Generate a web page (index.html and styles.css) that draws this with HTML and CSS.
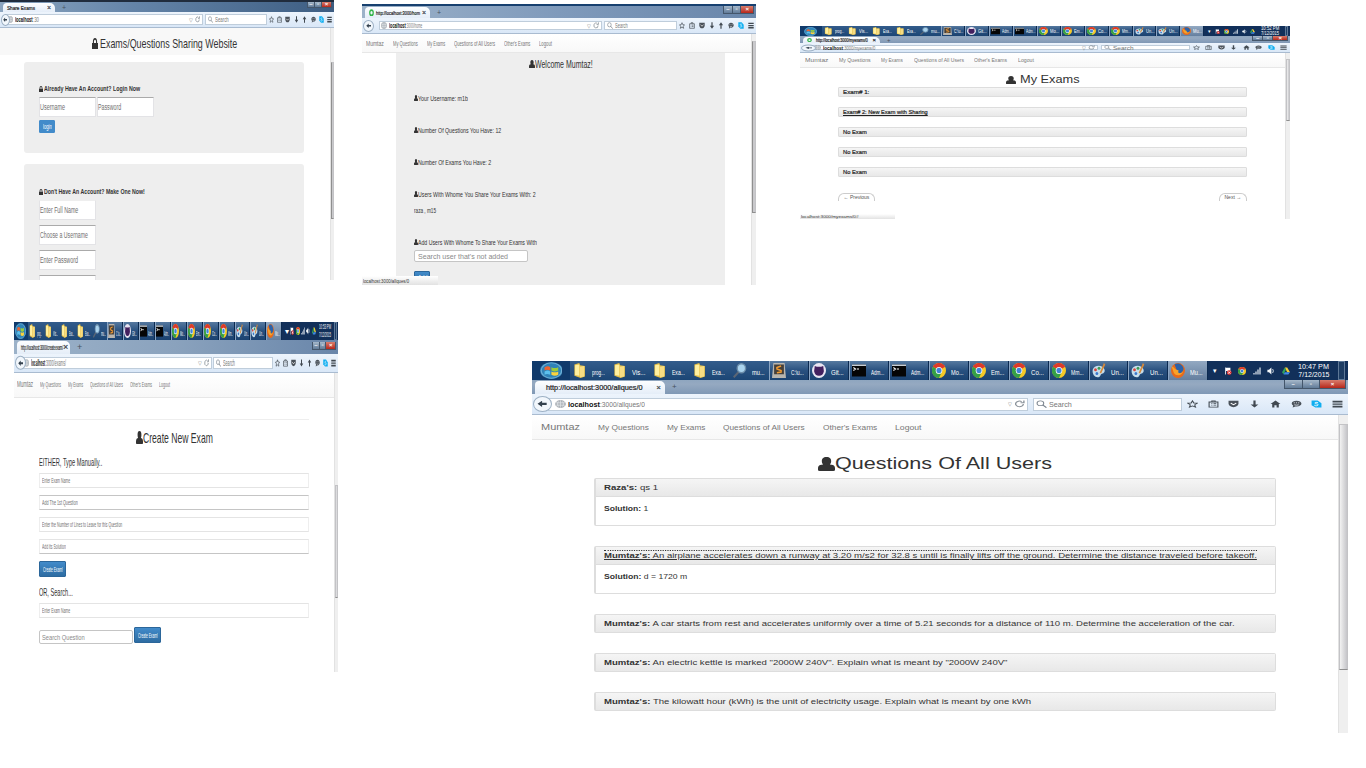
FILE: index.html
```html
<!DOCTYPE html>
<html lang="en">
<head>
<meta charset="utf-8">
<title>Exams/Questions Sharing Website</title>
<link rel="stylesheet" href="styles.css">
</head>
<body>
<svg class="defs" aria-hidden="true">
  <symbol id="user" viewBox="0 0 20 20" preserveAspectRatio="none"><path d="M10 0C6 0 4.500 2.500 4.500 6c0 2 .5 3.500 1.500 4.700L2.500 11.500C.8 12.500 0 14 0 16v2.500Q0 20 2 20h16q2 0 2-1.500V16c0-2-.8-3.500-2.500-4.500L14 10.700c1-1.200 1.500-2.700 1.500-4.700C15.500 2.500 14 0 10 0z"/></symbol>
  <symbol id="lock" viewBox="0 0 20 20" preserveAspectRatio="none"><path d="M10 0C5.500 0 3 3 3 6.500V9H0v11h20V9h-3V6.500C17 3 14.500 0 10 0zM6.500 9V6.500C6.500 4.500 8 3 10 3s3.500 1.500 3.500 3.500V9z"/></symbol>
  <symbol id="folder" viewBox="0 0 20 20" preserveAspectRatio="none"><path d="M2 2l7-2 1 3 7 1v14l-6 2-9-3z" fill="#e8c24a"/><path d="M3 3l6-1v15l-6-1z" fill="#fff0a0"/><path d="M10 5l6-1v14l-6 1z" fill="#f7dd83"/></symbol>
  <symbol id="lens" viewBox="0 0 20 20" preserveAspectRatio="none"><path d="M8 12L1 19" stroke="#5b6675" stroke-width="3"/><circle cx="12" cy="7" r="6" fill="#a9d3ee" stroke="#6d8eaa" stroke-width="2"/></symbol>
  <symbol id="sublime" viewBox="0 0 20 20" preserveAspectRatio="none"><path d="M2 0h16l2 20H0z" fill="#b9b5ae"/><path d="M3 2h14v13H3z" fill="#45403b"/><path d="M13 4L7 6v2l6 2v2l-6 1" fill="none" stroke="#f39b31" stroke-width="2"/></symbol>
  <symbol id="git" viewBox="0 0 20 20" preserveAspectRatio="none"><circle cx="10" cy="10" r="10" fill="#e9e5f2"/><path d="M4 4l3 1h6l3-1 1 7c-1 4-3 6-7 6s-6-2-7-6z" fill="#43205f"/></symbol>
  <symbol id="cmd" viewBox="0 0 20 20" preserveAspectRatio="none"><path d="M0 2h20v16H0z" fill="#050505"/><path d="M0 2h20v2H0z" fill="#c8d0d8"/><path d="M2 6l3 2-3 2M7 8h3" fill="none" stroke="#fff" stroke-width="1.500"/></symbol>
  <symbol id="chrome" viewBox="0 0 20 20" preserveAspectRatio="none"><circle cx="10" cy="10" r="10" fill="#f5c928"/><path d="M10 10L1.300 5A10 10 0 0 1 18.700 5z" fill="#dc3b2c"/><path d="M10 10L1.300 5A10 10 0 0 0 10 20l4-8z" fill="#34a046"/><circle cx="10" cy="10" r="4.700" fill="#fff"/><circle cx="10" cy="10" r="3.600" fill="#3f83d8"/></symbol>
  <symbol id="paint" viewBox="0 0 20 20" preserveAspectRatio="none"><path d="M1 9c2-7 15-7 17 0 1 5-4 5-5 6s-1 4-5 4-8-4-7-10z" fill="#c6ddeb"/><circle cx="5" cy="9" r="2" fill="#d8453c"/><circle cx="10" cy="7" r="2" fill="#3b9c53"/><circle cx="7" cy="14" r="2" fill="#3c79cc"/><path d="M17 0l2 2-6 12-2-1z" fill="#d58a3c"/></symbol>
  <symbol id="firefox" viewBox="0 0 20 20" preserveAspectRatio="none"><circle cx="10" cy="10" r="10" fill="#e66a1c"/><path d="M5 2c4-3 12-1 13 6-2 7-8 8-11 3 2-2 0-4-2-9z" fill="#2c62a8"/><path d="M1 5c3 0 4 3 7 4l3 1c-3 4 4 5 6 1 0 5-9 8-13 2z" fill="#f7a32a"/></symbol>
  <symbol id="orb" viewBox="0 0 20 20" preserveAspectRatio="none"><circle cx="10" cy="10" r="10" fill="#2f79ad"/><circle cx="10" cy="10" r="9" fill="#2f83b8" stroke="#6fb0d6"/><path d="M4 6q3-2 5 0v4q-3-2-5 0z" fill="#ee6330"/><path d="M10 6q3 2 6 0v4q-3 2-6 0z" fill="#9ccb3b"/><path d="M4 11q3-2 5 0v4q-3-2-5 0z" fill="#5cc0ec"/><path d="M10 11q3 2 6 0v4q-3 2-6 0z" fill="#fbd23d"/></symbol>
  <symbol id="arrow" viewBox="0 0 20 20" preserveAspectRatio="none"><path d="M1 10l9-8v5h9v6h-9v5z"/></symbol>
  <symbol id="globe" viewBox="0 0 20 20" preserveAspectRatio="none"><circle cx="10" cy="10" r="9" fill="#aeb4ba" stroke="#858b92"/><path d="M2 7h16M2 13h16M10 1v18M6 3q-3 7 0 14M14 3q3 7 0 14" stroke="#e8ebee" fill="none" stroke-width="1.300"/></symbol>
  <symbol id="reload" viewBox="0 0 20 20" preserveAspectRatio="none"><path d="M17 10a7 7 0 1 1-3-6M18 1v6h-6" fill="none" stroke="#8a929a" stroke-width="2.500"/></symbol>
  <symbol id="find" viewBox="0 0 20 20" preserveAspectRatio="none"><circle cx="8" cy="8" r="6" fill="none" stroke="#7c858f" stroke-width="2"/><path d="M12 12l7 7" stroke="#7c858f" stroke-width="2.500"/></symbol>
  <symbol id="star" viewBox="0 0 20 20" preserveAspectRatio="none"><path d="M10 2l2.500 5.500 6 .5-4.500 4 1.500 6L10 15l-5.500 3L6 12 1.500 8l6-.5z" fill="none" stroke="#414951" stroke-width="2"/></symbol>
  <symbol id="clip" viewBox="0 0 20 20" preserveAspectRatio="none"><path d="M2 5h16v13H2zM7 5V2h6v3M6 9h2M10 9h5M6 13h2M10 13h5" fill="none" stroke="#414951" stroke-width="2"/></symbol>
  <symbol id="pocket" viewBox="0 0 20 20" preserveAspectRatio="none"><path d="M1 2h18v7c0 5-4 9-9 9s-9-4-9-9z" fill="#4a5159"/><path d="M5 8l5 4 5-4" fill="none" stroke="#fff" stroke-width="2.200"/></symbol>
  <symbol id="down" viewBox="0 0 20 20" preserveAspectRatio="none"><path d="M8 1h4v10h5l-7 8-7-8h5z" fill="#414951"/></symbol>
  <symbol id="home" viewBox="0 0 20 20" preserveAspectRatio="none"><path d="M10 1l9 9h-3v9h-4v-6H8v6H4v-9H1z" fill="#414951"/></symbol>
  <symbol id="chat" viewBox="0 0 20 20" preserveAspectRatio="none"><path d="M10 2c5 0 9 3 9 7 0 5-5 8-11 7l-5 3 1-5C-2 8 3 2 10 2z" fill="#4a5159"/><path d="M5 7h2M9 7h2M13 7h2M6 12q4 2 8 0" stroke="#dfe6ee" stroke-width="1.800" fill="none"/></symbol>
  <symbol id="skype" viewBox="0 0 20 20" preserveAspectRatio="none"><path d="M1 1h11l7 7v11H8l-7-6z" fill="#10aef0"/><path d="M13 7c-3-2-6-1-6 1s6 1 6 4-5 3-7 1" fill="none" stroke="#fff" stroke-width="1.800"/></symbol>
  <symbol id="menu" viewBox="0 0 20 20" preserveAspectRatio="none"><path d="M1 2h18v4H1zM1 8.500h18v3.500H1zM1 14.500h18v4H1z" fill="#414951"/></symbol>
  <symbol id="flag" viewBox="0 0 20 20" preserveAspectRatio="none"><path d="M3 1h2v18H3zM5 2h11v8H5z" fill="#fff"/><circle cx="13" cy="14" r="6" fill="#d92b2b"/><path d="M10 11l6 6M16 11l-6 6" stroke="#fff" stroke-width="2"/></symbol>
  <symbol id="signal" viewBox="0 0 20 20" preserveAspectRatio="none"><path d="M1 15h3v4H1zM6 11h3v8H6zM11 6h3v13h-3zM16 1h3v18h-3z" fill="#e8eef5"/></symbol>
  <symbol id="sound" viewBox="0 0 20 20" preserveAspectRatio="none"><path d="M1 7h4l6-6v18l-6-6H1z" fill="#f4f7fa"/><path d="M14 5q4 5 0 10" fill="none" stroke="#f4f7fa" stroke-width="2"/></symbol>
  <symbol id="drive" viewBox="0 0 20 20" preserveAspectRatio="none"><path d="M7 1h6l7 12h-7z" fill="#f8cc35"/><path d="M7 1l3 6-6 11-4-5z" fill="#31a25a"/><path d="M7 13h13l-4 6H4z" fill="#3f8ae8"/></symbol>
</svg>

<main class="desk">
  <section class="window login">
    <div data-chrome="login"></div>
    <div class="body">
      <div class="page">
        <header class="masthead"><svg class="icon"><use href="#lock"/></svg><span data-w="137">Exams/Questions Sharing Website</span></header>
        <div class="jumbo first">
          <div class="label"><svg class="icon"><use href="#lock"/></svg><span data-w="96">Already Have An Account? Login Now</span></div>
          <div class="pair"><div class="field"><span data-w="25">Username</span></div><div class="field"><span data-w="23">Password</span></div></div>
          <div class="button"><span data-w="9">login</span></div>
        </div>
        <div class="jumbo second">
          <div class="label"><svg class="icon"><use href="#lock"/></svg><span data-w="101">Don't Have An Account? Make One Now!</span></div>
          <div class="field"><span data-w="38">Enter Full Name</span></div>
          <div class="field"><span data-w="48">Choose a Username</span></div>
          <div class="field"><span data-w="38">Enter Password</span></div>
          <div class="field"></div>
        </div>
      </div>
      <div class="scroll"><i class="thumb"></i></div>
    </div>
  </section>

  <section class="window welcome">
    <div data-chrome="welcome"></div>
    <div class="body">
      <div class="page">
        <nav class="nav"><span class="brand" data-w="18">Mumtaz</span><span data-w="25">My Questions</span><span data-w="18">My Exams</span><span data-w="41">Questions of All Users</span><span data-w="26">Other's Exams</span><span data-w="13">Logout</span></nav>
        <div class="profile">
          <h2 class="title"><svg class="icon"><use href="#user"/></svg><span data-w="58">Welcome Mumtaz!</span></h2>
          <div class="line"><svg class="icon"><use href="#user"/></svg><span data-w="50">Your Username: m1b</span></div>
          <div class="line"><svg class="icon"><use href="#user"/></svg><span data-w="83">Number Of Questions You Have: 12</span></div>
          <div class="line"><svg class="icon"><use href="#user"/></svg><span data-w="73">Number Of Exams You Have: 2</span></div>
          <div class="line tight"><svg class="icon"><use href="#user"/></svg><span data-w="118">Users With Whome You Share Your Exams With: 2</span></div>
          <div class="line"><span data-w="22">raza , m15</span></div>
          <div class="line add"><svg class="icon"><use href="#user"/></svg><span data-w="119">Add Users With Whome To Share Your Exams With</span></div>
          <div class="search"><span data-w="90">Search user that's not added</span></div>
          <div class="button"><span data-w="9">Add</span></div>
        </div>
      </div>
      <div class="scroll"><i class="thumb"></i></div>
    </div>
    <div class="status"><span data-w="46">localhost:3000/allques/0</span></div>
  </section>

  <section class="window exams">
    <div data-chrome="exams"></div>
    <div class="body">
      <div class="page">
        <nav class="nav"><span class="brand" data-w="23">Mumtaz</span><span data-w="32">My Questions</span><span data-w="22">My Exams</span><span data-w="50">Questions of All Users</span><span data-w="33">Other's Exams</span><span data-w="16">Logout</span></nav>
        <h2 class="title"><svg class="icon"><use href="#user"/></svg><span data-w="60">My Exams</span></h2>
        <div class="bars">
          <div class="bar"><span data-w="26">Exam# 1:</span></div>
          <div class="bar linked"><span data-w="85">Exam# 2: New Exam with Sharing</span></div>
          <div class="bar"><span data-w="24">No Exam</span></div>
          <div class="bar"><span data-w="24">No Exam</span></div>
          <div class="bar"><span data-w="24">No Exam</span></div>
        </div>
        <div class="pager"><div class="pill"><span data-w="26">← Previous</span></div><div class="pill next"><span data-w="17">Next →</span></div></div>
      </div>
      <div class="scroll"><i class="thumb"></i></div>
    </div>
    <div class="status"><span data-w="58">localhost:3000/myexams/0#</span></div>
  </section>

  <section class="window create">
    <div data-chrome="create"></div>
    <div class="body">
      <div class="page">
        <nav class="nav"><span class="brand" data-w="16">Mumtaz</span><span data-w="21">My Questions</span><span data-w="15">My Exams</span><span data-w="33">Questions of All Users</span><span data-w="22">Other's Exams</span><span data-w="11">Logout</span></nav>
        <div class="form">
          <h2 class="title"><svg class="icon"><use href="#user"/></svg><span data-w="70">Create New Exam</span></h2>
          <h3 class="sub"><span data-w="63">EITHER, Type Manually..</span></h3>
          <div class="input"><span data-w="28">Enter Exam Name</span></div>
          <div class="input strong"><span data-w="36">Add The 1st Question</span></div>
          <div class="input"><span data-w="80">Enter the Number of Lines to Leave for this Question</span></div>
          <div class="input half"><span data-w="24">Add its Solution</span></div>
          <div class="button"><span data-w="20">Create Exam!</span></div>
          <h3 class="sub or"><span data-w="34">OR, Search...</span></h3>
          <div class="input"><span data-w="28">Enter Exam Name</span></div>
          <div class="finder"><div class="search"><span data-w="43">Search Question</span></div><div class="button"><span data-w="20">Create Exam!</span></div></div>
        </div>
      </div>
      <div class="scroll"><i class="thumb"></i></div>
    </div>
  </section>

  <section class="window questions">
    <div data-chrome="questions"></div>
    <div class="body">
      <div class="page">
        <nav class="nav"><span class="brand" data-w="39">Mumtaz</span><span data-w="51">My Questions</span><span data-w="38">My Exams</span><span data-w="82">Questions of All Users</span><span data-w="54">Other's Exams</span><span data-w="26">Logout</span></nav>
        <h2 class="title"><svg class="icon"><use href="#user"/></svg><span data-w="217">Questions Of All Users</span></h2>
        <div class="panels">
          <article class="panel"><div class="head"><span data-w="54"><b>Raza's:</b> qs 1</span></div><div class="answer"><span data-w="44"><b>Solution:</b> 1</span></div></article>
          <article class="panel"><div class="head linked"><span data-w="653"><b>Mumtaz's:</b> An airplane accelerates down a runway at 3.20 m/s2 for 32.8 s until is finally lifts off the ground. Determine the distance traveled before takeoff.</span></div><div class="answer"><span data-w="83"><b>Solution:</b> d = 1720 m</span></div></article>
          <article class="panel"><div class="head"><span data-w="631"><b>Mumtaz's:</b> A car starts from rest and accelerates uniformly over a time of 5.21 seconds for a distance of 110 m. Determine the acceleration of the car.</span></div></article>
          <article class="panel"><div class="head"><span data-w="403"><b>Mumtaz's:</b> An electric kettle is marked "2000W 240V". Explain what is meant by "2000W 240V"</span></div></article>
          <article class="panel"><div class="head"><span data-w="427"><b>Mumtaz's:</b> The kilowatt hour (kWh) is the unit of electricity usage. Explain what is meant by one kWh</span></div></article>
        </div>
      </div>
      <div class="scroll"><i class="thumb"></i></div>
    </div>
  </section>
</main>
<script src="app.js"></script>
</body>
</html>
```

FILE: styles.css
```css
* { box-sizing: border-box; }
body { margin: 0; background: #fff; overflow: hidden; font-family: "Liberation Sans", Arial, sans-serif; color: #333; }
h2, h3 { margin: 0; font-weight: 400; }
.defs { position: absolute; width: 0; height: 0; }
.desk { position: relative; width: 1366px; height: 768px; overflow: hidden; }
.window { position: absolute; display: flex; flex-direction: column; overflow: hidden; background: #fff; }
[data-w] { display: inline-block; flex: none; white-space: nowrap; }
.stretch { display: inline-block; transform-origin: 0 50%; white-space: nowrap; }
.icon { display: block; flex: none; fill: #333; }

/* Window frames */
.login { left: 0; top: 0; width: 334px; height: 280px; --url: 197px; --find: 62px; --lead: 6px; --sb: 4px; --gap: 2px; --ico: 5px; --icoh: 7px; --fs: 6px; }
.welcome { left: 362px; top: 4px; width: 394px; height: 281px; --url: 223px; --find: 73px; --lead: 17px; --sb: 5px; --gap: 2px; --ico: 6px; --icoh: 7px; --fs: 6px; }
.exams { left: 800px; top: 26px; width: 490px; height: 193px; --url: 286px; --find: 89px; --lead: 12px; --sb: 5px; --gap: 3px; --ico: 7px; --icoh: 5px; --fs: 5px; }
.create { left: 14px; top: 322px; width: 324px; height: 350px; --url: 190px; --find: 60px; --lead: 8px; --sb: 4px; --gap: 1px; --ico: 5px; --icoh: 8px; --fs: 8px; }
.questions { left: 532px; top: 361px; width: 816px; height: 372px; --url: 480px; --find: 149px; --lead: 16px; --sb: 10px; --gap: 5px; --ico: 11px; --icoh: 8px; --fs: 7px; }

/* Taskbar */
.taskbar { display: flex; flex: none; background: linear-gradient(#3d6693, #17406f 45%, #123661); color: #fff; font-size: var(--fs); overflow: hidden; }
.create .taskbar { height: 18px; }
.questions .taskbar { height: 19px; }
.exams .taskbar { height: 10px; }
.orb { display: flex; justify-content: center; align-items: center; width: 38px; background: #103a6b; }
.create .orb { width: 14px; }
.exams .orb { width: 22px; }
.orb svg { width: 60%; height: 90%; }
.create .orb svg { width: 80%; }
.task { display: flex; align-items: center; width: 39.9px; border-right: 1px solid #0c2a50; border-left: 1px solid #8ba5c3; background: linear-gradient(#56799f, #28507f 50%, #1b4270); }
.task.plain { border-color: transparent; background: linear-gradient(#335c8b, #1c4675); }
.task.active { background: linear-gradient(#93a9c2, #657f9f); }
.task span { margin-top: 2px; }
.task svg { width: 14px; height: 15px; margin: 0 5px 0 2px; flex: none; }
.create .task { width: 15.9px; }
.exams .task { width: 23.9px; }
.create .task svg { width: 7px; height: 14px; margin: 0 1px 0 0; }
.exams .task svg { width: 9px; height: 8px; margin: 0 2px 0 1px; }
.exams .task span { margin-top: 0; }
.tray { flex: 1; display: flex; align-items: center; justify-content: space-around; background: #12305a; padding-left: 2px; }
.tray svg { width: 8px; height: 8px; }
.create .tray svg { width: 4px; height: 8px; }
.exams .tray svg { width: 5px; height: 5px; }
.clock { display: flex; flex-direction: column; align-items: center; line-height: 8px; padding: 0 2px; }
.exams .clock { line-height: 5px; font-size: 4.500px; }
.peek { width: 7px; align-self: stretch; border: 1px solid #5e7897; background: #1d3c63; }
.create .peek, .exams .peek { width: 3px; }

/* Title bar, tab and toolbar */
.titlebar { display: flex; align-items: flex-end; flex: none; background: linear-gradient(#8fa6bf, #95a9c1 30%, #7f98b5); padding-left: 3px; }
.login .titlebar { height: 12px; background: linear-gradient(90deg, #8ba5c0, #6484a8 40%, #3d5d82); border-top: 2px solid #202c3d; }
.welcome .titlebar { height: 14px; background: linear-gradient(90deg, #9cb2c9, #7f9abb 50%, #6986aa); border-top: 2px solid #17406f; }
.exams .titlebar { height: 7px; }
.create .titlebar { height: 14px; background: linear-gradient(90deg, #9cb2c9, #8aa2bd 50%, #6986aa); }
.questions .titlebar { height: 14px; }
.tab { display: flex; align-items: center; justify-content: space-between; height: calc(100% - 1px); padding: 0 4px; background: linear-gradient(#fdfeff, #e4edf8); border-radius: 4px 5px 0 0; color: #222; font-size: var(--fs); -webkit-text-stroke: .2px #222; }
.questions .tab { padding-left: 11px; }
.tab svg { width: 5px; height: 70%; }
.tab em, .plus { font-style: normal; font-size: calc(var(--fs) + 1px); line-height: 1; color: #48525e; }
.plus { align-self: center; margin-left: 7px; }
.buttons { display: flex; align-self: flex-start; margin: 0 2px 0 auto; border: 1px solid #44566b; border-top: 0; }
.buttons i { display: flex; align-items: center; justify-content: center; flex: 1; background: linear-gradient(#a6b8ca, #617b98); border-right: 1px solid #44566b; color: #fff; font: 700 6px/5px "Liberation Sans", Arial, sans-serif; overflow: hidden; }
.buttons i:last-child { flex: 1.5; border: 0; background: linear-gradient(#d87d6d, #b7281b); }
.login .buttons { width: 25px; height: 6px; }
.welcome .buttons { width: 31px; height: 8px; }
.exams .buttons { width: 36px; height: 5px; }
.create .buttons { width: 24px; height: 8px; margin-top: 2px; }
.questions .buttons { width: 62px; height: 9px; }
.toolbar { display: flex; align-items: center; flex: none; padding-left: var(--lead); background: linear-gradient(#edf4fc, #d9e7f7); border-bottom: 1px solid #a9bbd0; position: relative; }
.login .toolbar { height: 16px; }
.welcome .toolbar { height: 16px; }
.exams .toolbar { height: 10px; }
.create .toolbar { height: 19px; }
.questions .toolbar { height: 21px; }
.url, .find { display: flex; align-items: center; flex: none; height: 65%; background: #fff; border: 1px solid #bfcddb; font-size: calc(var(--fs) + .5px); color: #777; }
.login .url, .login .find { height: 70%; }
.url { width: var(--url); padding-left: 1px; }
.questions .url { padding-left: 6px; }
.url svg, .find svg { width: var(--ico); height: var(--icoh); flex: none; margin-right: 2px; }
.url b { color: #111; }
.url .drop { margin: 0 2px 0 auto; font-size: 5px; }
.find { width: var(--find); margin-left: var(--gap); padding-left: 2px; }
.back { position: absolute; left: 1px; top: 50%; width: calc(var(--lead) + 3px); height: 80%; transform: translateY(-50%); display: flex; align-items: center; justify-content: center; border: 1px solid #9cb0c4; border-radius: 50%; background: #f2f7fc; }
.back svg { width: 60%; height: 55%; fill: #34414e; }
.welcome .back { width: 11px; }
.tools { display: grid; grid-template-columns: repeat(8, 1fr); flex: 1; justify-items: center; align-items: center; }
.tools svg { width: var(--ico); height: var(--icoh); }
.tools .up { transform: rotate(180deg); }

/* Page area */
.body { display: flex; flex: 1; min-height: 0; }
.page { flex: 1; min-width: 0; overflow: hidden; }
.scroll { flex: none; width: var(--sb); background: #efefef; border-left: 1px solid #e2e2e2; display: flex; flex-direction: column; align-items: stretch; }
.thumb { background: linear-gradient(90deg, #f2f2f2, #c5c5c9); border: 1px solid #c3c3c6; border-bottom-color: #8f8f8f; }
.login .thumb { margin-top: 34px; height: 157px; background: #c9c9cc; border-left-color: #8f8f8f; }
.welcome .thumb { margin-top: 7px; height: 172px; background: #c9c9cc; border-left-color: #8f8f8f; }
.exams .thumb { margin-top: 6px; height: 62px; }
.create .thumb { margin-top: 112px; height: 113px; }
.questions .thumb { margin-top: 9px; height: 246px; }
.nav { display: flex; align-items: center; background: linear-gradient(#fff, #f8f8f8); border-bottom: 1px solid #e7e7e7; color: #777; }
.title { display: flex; align-items: center; justify-content: center; }
.button { display: flex; align-items: center; justify-content: center; background: linear-gradient(#428bca, #2d6ca2); border: 1px solid #2b669a; border-radius: 1px; color: #fff; }
.status { position: absolute; left: 0; bottom: 0; display: flex; align-items: center; background: linear-gradient(#fff, #e2e2e2); color: #333; padding-left: 1px; }

/* Login */
.masthead { display: flex; justify-content: center; align-items: center; gap: 2px; height: 27px; padding-top: 3px; padding-right: 1px; background: #f8f8f8; font-size: 13.500px; }
.masthead .icon { width: 6px; height: 11px; }
.jumbo { width: 280px; margin-left: 24px; padding-left: 15px; background: #eee; border-radius: 3px; }
.first { height: 91px; margin-top: 7px; padding-top: 20px; }
.second { height: 130px; margin-top: 11px; padding-top: 21px; }
.label { display: flex; align-items: center; gap: 1px; height: 13px; font-size: 8px; font-weight: 700; }
.label .icon { width: 4px; height: 6px; }
.login .field { display: flex; align-items: center; width: 57px; height: 20px; padding-left: 0; background: #fff; border: 1px solid #e3e3e6; border-top-color: #aaa; font-size: 8.500px; color: #6f6f6f; }
.pair { display: flex; gap: 1px; margin: 2px 0 3px; }
.login .button { width: 16px; height: 13px; font-size: 7px; background: #428bca; border-color: #428bca; }
.second .field { margin: 2px 0 5px; }
.second .label + .field { border-top-color: #eee; }
.second .field + .field { margin-top: 0; }

/* Welcome */
.welcome .nav { height: 19px; padding-left: 4px; gap: 9px; font-size: 6.500px; }
.welcome .brand { font-size: 7.500px; }
.profile { width: 329px; height: 232px; margin-left: 34px; padding: 3px 0 0 18px; background: #eee; }
.profile .title { height: 16px; margin: 0 0 18px -18px; font-size: 10px; }
.profile .title .icon { width: 6px; height: 8px; }
.line { display: flex; align-items: center; height: 16px; margin-bottom: 16px; font-size: 7px; }
.line.tight { margin-bottom: 0; }
.line.add { height: 16px; margin-bottom: 0; }
.line .icon { width: 4px; height: 6px; }
.search { display: flex; align-items: center; background: #fff; border: 1px solid #c5c5c5; border-radius: 2px; color: #8a8a8a; }
.welcome .search { width: 114px; height: 12px; padding-left: 3px; font-size: 8px; }
.welcome .button { width: 16px; height: 12px; margin-top: 9px; font-size: 7px; }
.welcome .status { width: 76px; height: 9px; font-size: 5.500px; }

/* My Exams */
.exams .nav { height: 15px; padding-left: 5px; gap: 10.500px; font-size: 5.500px; }
.exams .brand { font-size: 6px; }
.exams .title { height: 19px; padding-top: 4px; gap: 4px; font-size: 10px; }
.exams .title .icon { width: 10px; height: 8px; }
.bars { display: grid; gap: 10px; width: 409px; margin-left: 38px; }
.bar { height: 10px; padding-left: 4px; display: flex; align-items: center; background: linear-gradient(#f5f5f5, #e8e8e8); border: 1px solid #ddd; border-radius: 1px; font-size: 6px; color: #222; -webkit-text-stroke: .2px #222; }
.linked .stretch { text-decoration: underline; }
.pager { display: flex; justify-content: space-between; width: 409px; margin: 16px 0 0 38px; height: 8px; }
.pill { display: flex; align-items: flex-start; justify-content: center; width: 37px; height: 8px; border: 1px solid #ccc; border-bottom: 0; border-radius: 6px 6px 0 0; font-size: 5px; line-height: 6px; color: #555; }
.pill.next { width: 28px; }
.exams .status { width: 95px; height: 5px; font-size: 4px; line-height: 5px; }

/* Create New Exam */
.create .nav { height: 25px; padding: 0 0 2px 3px; gap: 7px; font-size: 7.500px; }
.create .brand { font-size: 9px; }
.form { width: 270px; margin: 21px 0 0 25px; border-top: 1px solid #eee; }
.form .title { height: 35px; font-size: 15px; }
.form .title .icon { width: 7px; height: 13px; }
.form .sub { display: flex; align-items: center; height: 13px; margin-bottom: 5px; font-size: 11px; }
.input { display: flex; align-items: center; width: 270px; height: 15px; margin-bottom: 7px; padding-left: 2px; border: 1px solid #e4e4e4; border-right-color: #eee; border-left-color: #eee; font-size: 7px; color: #6f6f6f; }
.input.strong { border-color: #c5c5c5 #eee; }
.input.half { border-bottom-color: #c5c5c5; }
.create .button { width: 27px; height: 16px; font-size: 7px; }
.form .or { margin: 8px 0 5px; }
.finder { display: flex; gap: 1px; margin-top: 9px; }
.create .search { width: 94px; height: 14px; margin-top: 3px; padding-left: 2px; font-size: 8px; }

/* Questions Of All Users */
.questions .nav { height: 25px; padding-left: 9px; gap: 18px; font-size: 8px; }
.questions .brand { font-size: 9px; }
.questions .title { height: 38px; padding-top: 9px; font-size: 17px; }
.questions .title .icon { width: 17px; height: 14px; }
.panels { display: grid; gap: 20px; width: 682px; margin-left: 62px; }
.panel { border: 1px solid #ddd; border-left-width: 2px; border-radius: 2px; font-size: 8px; }
.head { display: flex; align-items: center; height: 17px; padding-left: 8px; background: linear-gradient(#f5f5f5, #e8e8e8); }
.answer { height: 29px; padding: 7px 0 0 8px; border-top: 1px solid #ddd; line-height: 10px; }
.head.linked .stretch { position: relative; }
.head.linked .stretch::before { content: ""; position: absolute; left: 0; right: 0; top: -1px; border-top: 1px dotted #333; }
```

FILE: app.js
```js
const svg = (id, cls = "") => `<svg class="${cls}"><use href="#${id}"/></svg>`;

const tasks = [
  ["folder", "prog..."], ["folder", "Vis..."], ["folder", "Exa..."], ["folder", "Exa..."],
  ["lens", "mu..."], ["sublime", "C:\\u..."], ["git", "Git..."], ["cmd", "Adm..."],
  ["cmd", "Adm..."], ["chrome", "Mo..."], ["chrome", "Em..."], ["chrome", "Co..."],
  ["chrome", "Mm..."], ["paint", "Un..."], ["paint", "Un..."], ["firefox", "Mu..."]
];

const chromes = {
  login: { tab: 52, name: "Share Exams", nameW: 28, host: "localhost", hostW: 18, path: ":30", pathW: 6, find: 14 },
  welcome: { tab: 65, name: "http://localhost:3000/hom", nameW: 44, spin: true, host: "localhost", hostW: 17, path: ":3000/home", pathW: 16, find: 13 },
  exams: { tab: 77, name: "http://localhost:3000/myexams/0", nameW: 52, spin: true, host: "localhost", hostW: 20, path: ":3000/myexams/0", pathW: 32, find: 20, bar: true, label: 9, time: "10:52 PM", date: "7/12/2015", clockW: 18 },
  create: { tab: 53, name: "http://localhost:3000/createexam/", nameW: 42, host: "localhost", hostW: 14, path: ":3000/exams/", pathW: 21, find: 12, bar: true, label: 5, time: "10:53 PM", date: "7/12/2015", clockW: 12 },
  questions: { tab: 130, name: "http://localhost:3000/allques/0", nameW: 97, host: "localhost", hostW: 32, path: ":3000/allques/0", pathW: 45, find: 23, bar: true, label: 13, time: "10:47 PM", date: "7/12/2015", clockW: 31 }
};

function taskbar(c) {
  const items = tasks.map(([icon, text], i) =>
    `<div class="task ${i < 5 ? "plain" : i === 15 ? "active" : ""}">${svg(icon)}<span data-w="${c.label}">${text}</span></div>`).join("");
  return `<div class="taskbar"><div class="orb">${svg("orb")}</div>${items}
    <div class="tray"><span>▾</span>${["flag", "chrome", "signal", "sound", "drive"].map(i => svg(i)).join("")}
    <div class="clock"><span data-w="${c.clockW}">${c.time}</span><span data-w="${c.clockW}">${c.date}</span></div><i class="peek"></i></div></div>`;
}

document.querySelectorAll("[data-chrome]").forEach(el => {
  const c = chromes[el.dataset.chrome];
  const last = el.dataset.chrome === "questions" || el.dataset.chrome === "exams" ? "home" : "down";
  const tools = ["star", "clip", "pocket", "down", last, "chat", "skype", "menu"]
    .map((id, i) => svg(id, i === 4 && id === "down" ? "up" : "")).join("");
  el.outerHTML = `${c.bar ? taskbar(c) : ""}
    <div class="titlebar"><div class="tab" style="width:${c.tab}px">${c.spin ? '<svg viewBox="0 0 10 10" preserveAspectRatio="none"><circle cx="5" cy="5" r="3.500" fill="none" stroke="#35b44a" stroke-width="2.500"/></svg>' : ""}<span data-w="${c.nameW}">${c.name}</span><em>×</em></div>
    <span class="plus">+</span><div class="buttons"><i>–</i><i>▫</i><i>×</i></div></div>
    <div class="toolbar"><div class="url">${svg("globe")}<b data-w="${c.hostW}">${c.host}</b><span data-w="${c.pathW}">${c.path}</span><span class="drop">▽</span>${svg("reload")}</div>
    <div class="find">${svg("find")}<span data-w="${c.find}">Search</span></div><div class="tools">${tools}</div><div class="back">${svg("arrow")}</div></div>`;
});

/* Stretch each label horizontally to its own width. */
document.querySelectorAll("[data-w]").forEach(el => {
  const inner = document.createElement("span");
  inner.className = "stretch";
  inner.append(...el.childNodes);
  el.append(inner);
  const width = Number(el.dataset.w);
  inner.style.transform = `scaleX(${width / inner.offsetWidth})`;
  el.style.width = `${width}px`;
});
```
